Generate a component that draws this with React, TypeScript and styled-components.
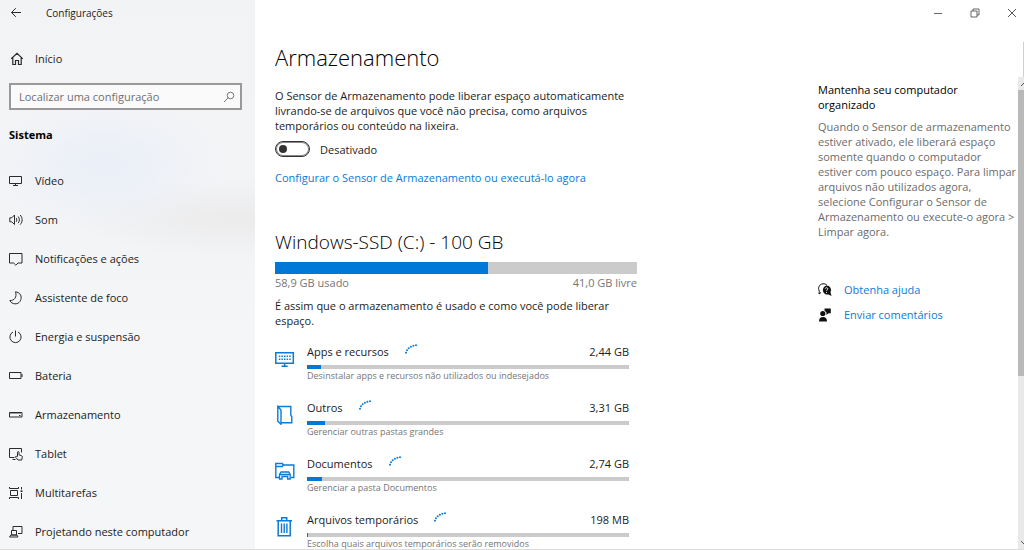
import React, { useState } from "react";
import styled, { createGlobalStyle } from "styled-components";

const GlobalStyle = createGlobalStyle`
  *, *::before, *::after { box-sizing: border-box; }
  body {
    margin: 0;
    background: #fff;
    color: #1c1c1c;
    font-family: "Open Sans", "Noto Sans", sans-serif;
    font-size: 11px;
    line-height: 15px;
  }
  h1, h2, h3, p, ul { margin: 0; padding: 0; font-weight: 400; }
  ul { list-style: none; }
  button { border: 0; padding: 0; background: none; color: inherit; font: inherit; }
  svg { display: block; flex: none; }
`;

const Window = styled.div`
  display: flex;
  height: 100vh;
  overflow: hidden;
  border-bottom: 1px solid #dedcdb;
`;

const Sidebar = styled.aside`
  display: flex;
  flex-direction: column;
  flex: none;
  width: 255px;
  padding: 0 13px 0 9px;
  overflow: hidden;
  background:
    radial-gradient(ellipse 120px 70px at 105px 165px, #eaeff8, transparent),
    radial-gradient(ellipse 170px 40px at 240px 218px, #ebebec, transparent),
    linear-gradient(#f2f3f5, #f3f4f5 45%, #f5f6f7 60%);
`;

const SidebarTitle = styled.div`
  display: flex;
  align-items: center;
  flex: none;
  gap: 23px;
  height: 26px;
  font-size: 10px;
`;

const NavLink = styled.a`
  display: flex;
  align-items: center;
  gap: 12px;
  height: 39px;
  color: inherit;
  text-decoration: none;
`;

const HomeLink = styled(NavLink)`
  flex: none;
  margin-top: 13px;
`;

const SearchBox = styled.label`
  display: flex;
  align-items: center;
  flex: none;
  height: 27px;
  margin-top: 5px;
  padding: 0 5px 0 8px;
  border: 2px solid #999;
  background: #fafafb;
  color: #707070;
`;

const SearchInput = styled.input`
  flex: 1;
  min-width: 0;
  padding: 0;
  border: 0;
  outline: 0;
  background: none;
  color: inherit;
  font: inherit;
  &::placeholder { color: #707070; opacity: 1; }
`;

const SectionName = styled.h2`
  flex: none;
  margin: 17px 0 19px;
  font-size: 11px;
  font-weight: 700;
  color: #000;
`;

const Main = styled.div`
  display: flex;
  flex-direction: column;
  flex: 1;
  min-width: 0;
`;

const WindowControls = styled.div`
  display: flex;
  align-items: center;
  justify-content: flex-end;
  flex: none;
  gap: 27px;
  height: 26px;
  padding-right: 7px;
`;

const Body = styled.div`
  display: flex;
  flex: 1;
  min-height: 0;
`;

const ScrollArea = styled.div`
  display: flex;
  justify-content: space-between;
  flex: 1;
  gap: 40px;
  min-width: 0;
  padding: 17px 0 0 20px;
  overflow-y: auto;
  scrollbar-width: none;
`;

const Content = styled.main`
  flex: 0 1 362px;
`;

const PageTitle = styled.h1`
  font-size: 22px;
  line-height: 28px;
  font-weight: 300;
  color: #000;
`;

const Intro = styled.p`
  margin-top: 17px;
`;

const ToggleRow = styled.label`
  display: flex;
  align-items: center;
  gap: 10px;
  height: 16px;
  margin-top: 8px;
`;

const Toggle = styled.input`
  display: flex;
  align-items: center;
  appearance: none;
  width: 35px;
  height: 16px;
  margin: 0;
  padding: 0 3px;
  border: 1px solid #333;
  border-radius: 8px;
  box-shadow: inset 0 0 0 1px #888;
  background: #fff;
  &::before {
    content: "";
    width: 8px;
    height: 8px;
    border-radius: 50%;
    background: #333;
  }
  &:checked { justify-content: flex-end; background: #0078d7; }
  &:checked::before { background: #fff; }
`;

const Link = styled.a`
  color: #0a7bd6;
  text-decoration: none;
`;

const SensorLink = styled(Link)`
  display: block;
  margin-top: 13px;
`;

const DriveTitle = styled.h2`
  margin-top: 43px;
  font-size: 19px;
  line-height: 28px;
  font-weight: 300;
  color: #000;
`;

const Bar = styled.div<{ $thick?: boolean }>`
  height: ${(p) => (p.$thick ? 12 : 4)}px;
  margin-top: ${(p) => (p.$thick ? 6 : 5)}px;
  background: #cbcbcb;
`;

const Fill = styled.div`
  height: 100%;
  background: #0078d7;
`;

const DriveLegend = styled.div`
  display: flex;
  justify-content: space-between;
  margin-top: 1px;
  color: #767676;
`;

const Explanation = styled.p`
  margin-top: 8px;
`;

const CategoryList = styled.ul`
  margin-top: 16px;
`;

const Category = styled.li`
  display: flex;
  gap: 12px;
  height: 56px;
  padding-right: 8px;
  & > svg { margin-top: 5px; }
`;

const CategoryBody = styled.div`
  flex: 1;
  min-width: 0;
`;

const CategoryHead = styled.div`
  display: flex;
  gap: 16px;
  height: 16px;
`;

const CategorySize = styled.span`
  margin-left: auto;
`;

const CategoryHint = styled.p`
  font-size: 9px;
  line-height: 12px;
  padding-top: 1px;
  color: #767676;
`;

const Tips = styled.aside`
  flex: none;
  width: 200px;
  padding-top: 39px;
`;

const TipTitle = styled.h3`
  padding-right: 40px;
  font-size: 11px;
  color: #000;
`;

const TipText = styled.p`
  margin: 7px 0 38px;
  color: #6c6c6c;
`;

const HelpLink = styled(Link)`
  display: flex;
  align-items: center;
  gap: 12px;
  height: 25px;
`;

const ScrollRail = styled.div`
  display: flex;
  flex-direction: column;
  flex: none;
  width: 6px;
  padding-top: 16px;
`;

const RailEdge = styled.div`
  flex: none;
  height: 35px;
  border-right: 1px solid #cfcfcf;
`;

const RailTrack = styled.div`
  display: flex;
  flex-direction: column;
  flex: 1;
  background: #e9e9e9;
`;

const RailButton = styled.button`
  height: 13px;
  color: #555;
`;

const RailThumb = styled.div`
  flex: 286;
  background: #b9b9b9;
`;

const RailRest = styled.div`
  flex: 160;
`;

type IconProps = { size?: number; children: React.ReactNode; color?: string };

const Icon = ({ size = 14, color = "#2b2b2b", children }: IconProps) => (
  <svg width={size} height={size} viewBox={`0 0 ${size} ${size}`} fill="none" stroke={color} strokeWidth="1" aria-hidden="true">
    {children}
  </svg>
);

const navItems = [
  { label: "Vídeo", icon: <path d="M.5 2.500h12v7H.5zM6.500 9.500v2M4 11.500h5" /> },
  {
    label: "Som",
    icon: <path d="M.8 4.800h2L5.500 2v9.500L2.800 8.800h-2zM7.200 5c.8 1.200.8 2.600 0 3.800M9.200 3.500c1.600 2 1.600 4.600 0 6.600M11.200 2c2.600 3 2.600 6.600 0 9.600" />,
  },
  { label: "Notificações e ações", icon: <path d="M.5 1.500h12.500v9.500H9l-2.200 2.200L4.600 11H.5z" /> },
  { label: "Assistente de foco", icon: <path d="M6.500.8c4 .6 6 3.200 5.600 6.600-.5 3.600-3 5.600-6.200 5.400-2.200-.1-4-1.200-5.100-3.200C5 9.700 8.300 6.500 6.500.8z" /> },
  { label: "Energia e suspensão", icon: <path d="M6.500.5v6M4 2a5.600 5.600 0 1 0 5 0" /> },
  { label: "Bateria", icon: <><path d="M.5 3.500h11.500v6H.5z" /><path d="M13 5v3" /></> },
  { label: "Armazenamento", icon: <><path d="M.5 4.500h12.500v4.500H.5z" /><path d="M1 5.500h12" stroke="#999" /><path d="M10 7.500h1.500" /></> },
  {
    label: "Tablet",
    icon: <><path d="M5.500 10.500h-5v-9h12v4M3.500 12.500h3" /><path d="M8.500 9.500v-4.200c0-1 1.500-1 1.500 0v2.600l2.400.7c.7.2 1 .6.900 1.200l-.5 3.200H9l-2.400-2.700c-.5-.8.400-1.400 1-.9z" /></>,
  },
  {
    label: "Multitarefas",
    icon: <><path d="M1.500 4.500h7v5h-7zM.5 1v1.500h9V1M.5 13v-1.500h9V13" /><path d="M12.500 1v2.500M12.500 7v6" /><path d="M11.500 5.200h2" strokeWidth="1.600" /></>,
  },
  { label: "Projetando neste computador", icon: <path d="M4 5.500v-4h9v7H9M2.500 5.500h5v4.500h-5zM.5 12h8.500l-1-2H1.800z" /> },
];

const blue = "#0a7bd6";

const categories = [
  {
    name: "Apps e recursos", size: "2,44 GB", fill: 4.2, hint: "Desinstalar apps e recursos não utilizados ou indesejados",
    icon: (
      <Icon size={20} color={blue}>
        <path d="M.8 3.700h17.500v10.500H.8z" strokeWidth="1.500" />
        <path d="M3.800 7.300h12M3.800 10.300h12" strokeWidth="1.500" strokeDasharray="1.500 1.100" />
        <path d="M9.600 14.500v2.500M6.500 17.200h6.200" strokeWidth="1.500" />
      </Icon>
    ),
  },
  {
    name: "Outros", size: "3,31 GB", fill: 5.7, hint: "Gerenciar outras pastas grandes",
    icon: (
      <Icon size={20} color={blue}>
        <path d="M2.800 1.500L6 5v14.200l-3.200-3zM2.800 1.500h13v8.500l1 2v5.800H6" strokeWidth="1.400" />
      </Icon>
    ),
  },
  {
    name: "Documentos", size: "2,74 GB", fill: 4.7, hint: "Gerenciar a pasta Documentos",
    icon: (
      <Icon size={20} color={blue}>
        <path d="M4 16.500H.8v-14h6.500l1 1.500h10.500v12.500H16M.8 5.500h6.500l1-1.500" strokeWidth="1.400" />
        <path d="M4.500 18v-4.500l1.500-2.500h7.700l1.500 2.500V18h-2.500v-2.500H7V18zM4.500 13.500h10.700" strokeWidth="1.300" />
      </Icon>
    ),
  },
  {
    name: "Arquivos temporários", size: "198 MB", fill: 0.3, hint: "Escolha quais arquivos temporários serão removidos",
    icon: (
      <Icon size={20} color={blue}>
        <path d="M1.500 3.700h15.500M3.200 3.700V18.800h12V3.700M6.700 3.500V.8h5v2.700" strokeWidth="1.500" />
        <path d="M6.500 6.500v9.500M9.200 6.500v9.500M11.900 6.500v9.500" strokeWidth="1.400" />
      </Icon>
    ),
  },
];

const spinnerDots = [[1, 8.800], [2, 6.300], [3.700, 4.300], [5.900, 2.700], [8.400, 1.700], [11, 1.200]];

const Spinner = () => (
  <svg width="12" height="11" viewBox="0 0 12 11" fill={blue} role="progressbar" aria-label="Calculando">
    {spinnerDots.map(([x, y]) => <circle key={x} cx={x} cy={y} r="1" />)}
  </svg>
);

export default function App() {
  const [sensorOn, setSensorOn] = useState(false);

  return (
    <Window>
      <GlobalStyle />
      <Sidebar>
        <SidebarTitle>
          <button type="button" aria-label="Voltar">
            <Icon><path d="M12 6.500H2.500M6.800 2.200L2.500 6.500l4.300 4.300" /></Icon>
          </button>
          <span>Configurações</span>
        </SidebarTitle>
        <HomeLink href="#inicio">
          <Icon>
            <path d="M2.200 6.800L8 1.300l5.800 5.500M3.800 5.500v7h2.700V8.500h3v4h2.700v-7" strokeWidth="1.200" />
          </Icon>
          Início
        </HomeLink>
        <SearchBox>
          <SearchInput type="text" aria-label="Localizar uma configuração" placeholder="Localizar uma configuração" />
          <Icon size={12} color="#777"><circle cx="7.500" cy="4.500" r="3.300" /><path d="M5.200 6.800L1 11" /></Icon>
        </SearchBox>
        <SectionName>Sistema</SectionName>
        <nav aria-label="Sistema">
          <ul>
            {navItems.map((item) => (
              <li key={item.label}>
                <NavLink href="#sistema">
                  <Icon>{item.icon}</Icon>
                  {item.label}
                </NavLink>
              </li>
            ))}
          </ul>
        </nav>
      </Sidebar>

      <Main>
        <WindowControls>
          <button type="button" aria-label="Minimizar"><Icon size={10} color="#666"><path d="M1 5.500h8" /></Icon></button>
          <button type="button" aria-label="Restaurar">
            <Icon size={10} color="#555"><path d="M1 3h6v6H1zM3 3V1h6v6H7" strokeWidth="0.900" /></Icon>
          </button>
          <button type="button" aria-label="Fechar"><Icon size={10} color="#444"><path d="M1 1l8 8M9 1L1 9" strokeWidth="0.900" /></Icon></button>
        </WindowControls>

        <Body>
          <ScrollArea>
            <Content>
              <PageTitle>Armazenamento</PageTitle>
              <Intro>
                O Sensor de Armazenamento pode liberar espaço automaticamente livrando-se de arquivos que você não precisa, como arquivos temporários ou conteúdo na lixeira.
              </Intro>
              <ToggleRow>
                <Toggle type="checkbox" role="switch" checked={sensorOn} onChange={(e) => setSensorOn(e.target.checked)} />
                {sensorOn ? "Ativado" : "Desativado"}
              </ToggleRow>
              <SensorLink href="#sensor">Configurar o Sensor de Armazenamento ou executá-lo agora</SensorLink>

              <DriveTitle>Windows-SSD (C:) - 100 GB</DriveTitle>
              <Bar $thick><Fill style={{ width: "58.9%" }} /></Bar>
              <DriveLegend>
                <span>58,9 GB usado</span>
                <span>41,0 GB livre</span>
              </DriveLegend>
              <Explanation>É assim que o armazenamento é usado e como você pode liberar espaço.</Explanation>

              <CategoryList>
                {categories.map((c) => (
                  <Category key={c.name}>
                    {c.icon}
                    <CategoryBody>
                      <CategoryHead>
                        <span>{c.name}</span>
                        <Spinner />
                        <CategorySize>{c.size}</CategorySize>
                      </CategoryHead>
                      <Bar><Fill style={{ width: `${c.fill}%` }} /></Bar>
                      <CategoryHint>{c.hint}</CategoryHint>
                    </CategoryBody>
                  </Category>
                ))}
              </CategoryList>
            </Content>

            <Tips>
              <TipTitle>Mantenha seu computador organizado</TipTitle>
              <TipText>
                Quando o Sensor de armazenamento estiver ativado, ele liberará espaço somente quando o computador estiver com pouco espaço. Para limpar arquivos não utilizados agora, selecione Configurar o Sensor de Armazenamento ou execute-o agora &gt; Limpar agora.
              </TipText>
              <HelpLink href="#ajuda">
                <Icon color="#111">
                  <path d="M3 9.500L1 11l.3-2.800C-.5 4.500 1.500 1 5 .8c1.500-.1 3 .4 4 1.500" />
                  <path d="M8.500 2.500a4.500 4.500 0 0 1 4 6.700l1 3.800-3-1.500A4.600 4.600 0 1 1 8.500 2.500z" fill="#111" stroke="none" />
                  <path d="M7.200 5.800c.2-1.600 2.800-1.400 2.600.1-.1.900-1.300 1-1.300 2M8.500 9v1" stroke="#fff" strokeWidth="0.900" />
                </Icon>
                Obtenha ajuda
              </HelpLink>
              <HelpLink href="#comentarios">
                <Icon color="none">
                  <g fill="#111">
                    <circle cx="4.800" cy="5.500" r="2.600" />
                    <path d="M1 13.500c0-3 1.200-4.500 4-4.500s4 1.500 4 4.500zM6.500.5h6.300v4.800h-2.300L8.500 7V4.500L6.500 2.500z" />
                  </g>
                </Icon>
                Enviar comentários
              </HelpLink>
            </Tips>
          </ScrollArea>
          <ScrollRail>
            <RailEdge />
            <RailTrack>
              <RailButton type="button" aria-label="Rolar para cima">
                <svg width="6" height="8" viewBox="0 0 6 8" fill="none" stroke="currentColor"><path d="M3 6l3-3" /></svg>
              </RailButton>
              <RailThumb />
              <RailRest />
              <RailButton type="button" aria-label="Rolar para baixo">
                <svg width="6" height="8" viewBox="0 0 6 8" fill="none" stroke="currentColor"><path d="M3 2l3 3" /></svg>
              </RailButton>
            </RailTrack>
          </ScrollRail>
        </Body>
      </Main>
    </Window>
  );
}
